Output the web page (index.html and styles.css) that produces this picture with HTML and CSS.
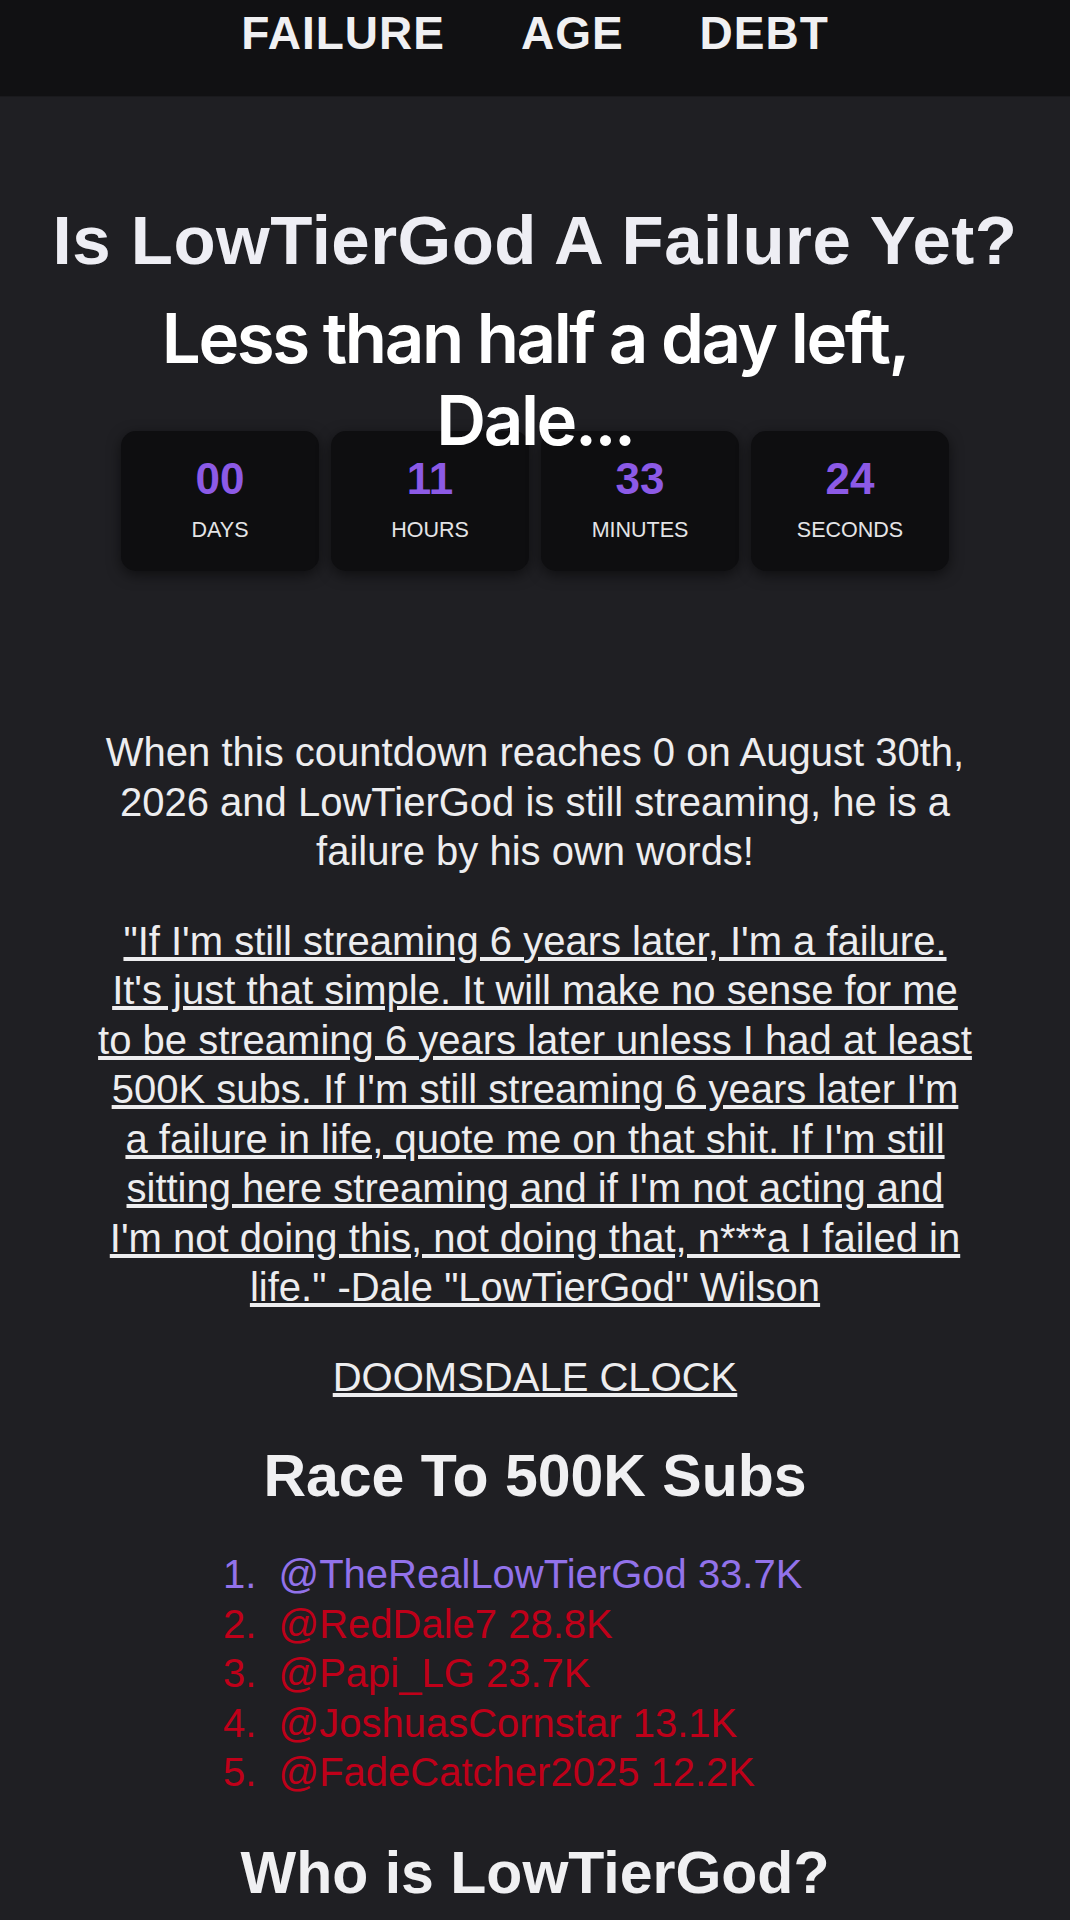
FILE: index.html
```html
<!DOCTYPE html>
<html lang="en">
<head>
  <meta charset="UTF-8" />
  <meta name="viewport" content="width=device-width, initial-scale=1.0" />
  <title>Is LowTierGod A Failure Yet?</title>
  <link rel="stylesheet" href="styles.css">
</head>
<body>
  <header class="topbar">
    <nav class="nav">
      <a href="#">FAILURE</a>
      <a href="#">AGE</a>
      <a href="#">DEBT</a>
    </nav>
  </header>

  <main class="container">
    <h1>Is LowTierGod A Failure Yet?</h1>
    <h2 class="tagline">Less than half a day left, Dale...</h2>

    <div class="countdown">
      <div class="unit">
        <div class="num" id="days">00</div>
        <div class="label">DAYS</div>
      </div>
      <div class="unit">
        <div class="num" id="hours">11</div>
        <div class="label">HOURS</div>
      </div>
      <div class="unit">
        <div class="num" id="minutes">33</div>
        <div class="label">MINUTES</div>
      </div>
      <div class="unit">
        <div class="num" id="seconds">24</div>
        <div class="label">SECONDS</div>
      </div>
    </div>

    <p class="intro">When this countdown reaches 0 on August 30th, 2026 and LowTierGod is still streaming, he is a failure by his own words!</p>

    <p><a href="#">"If I'm still streaming 6 years later, I'm a failure. It's just that simple. It will make no sense for me to be streaming 6 years later unless I had at least 500K subs. If I'm still streaming 6 years later I'm a failure in life, quote me on that shit. If I'm still sitting here streaming and if I'm not acting and I'm not doing this, not doing that, n***a I failed in life." -Dale "LowTierGod" Wilson</a></p>

    <p><a href="#">DOOMSDALE CLOCK</a></p>

    <h2>Race To 500K Subs</h2>
    <ol class="race">
      <li class="leader">@TheRealLowTierGod 33.7K</li>
      <li>@RedDale7 28.8K</li>
      <li>@Papi_LG 23.7K</li>
      <li>@JoshuasCornstar 13.1K</li>
      <li>@FadeCatcher2025 12.2K</li>
    </ol>

    <section class="about">
      <h2>Who is LowTierGod?</h2>
    </section>
  </main>
</body>
</html>
```

FILE: styles.css
```css
body {
  margin: 0;
  background: #1f1f23;
  color: #ededef;
  font-family: "Liberation Sans", Arial, sans-serif;
  font-size: 40px;
  line-height: 49.5px;
}
a {
  color: inherit;
}
.topbar {
  height: 97px;
  box-sizing: border-box;
  padding-top: 6px;
  background: #111113;
  border-bottom: 1px solid #1a1a1d;
}
.nav {
  display: flex;
  justify-content: center;
  gap: 76px;
  line-height: normal;
}
.nav a {
  color: #f0f0f2;
  text-decoration: none;
  font-size: 46px;
  font-weight: bold;
  letter-spacing: 1px;
}
.container {
  padding: 0 96px;
  text-align: center;
}
h1 {
  margin: 104px -60px 17px;
  font-size: 69px;
  line-height: normal;
  color: #eeeef4;
  letter-spacing: 0.5px;
}
h2 {
  margin: 40px 0;
  font-size: 59px;
  line-height: normal;
  color: #f0f0f2;
}
.tagline {
  position: relative;
  z-index: 1;
  height: 82px;
  margin: 0 0 52px;
  font-family: Inter, "Liberation Sans", sans-serif;
  font-weight: 600;
  font-size: 69px;
  line-height: 82px;
  letter-spacing: -0.035em;
  color: #ffffff;
}
.countdown {
  display: flex;
  justify-content: center;
  gap: 12px;
  margin: 0 -40px 157px;
}
.unit {
  width: 198px;
  box-sizing: border-box;
  padding: 23px 0 28px;
  background: #0e0e10;
  border-radius: 15px;
  box-shadow: 0 4px 14px rgba(0, 0, 0, 0.55);
}
.num {
  font-size: 44px;
  font-weight: bold;
  line-height: normal;
  color: #8c5ae6;
}
.label {
  margin-top: 14px;
  font-size: 21.5px;
  line-height: normal;
  color: #e4e4e6;
}
p {
  margin: 40px 0;
}
.intro {
  margin-top: 0;
}
.race {
  width: fit-content;
  margin: 39px auto 41px;
  padding: 0;
  text-align: left;
  color: #bf0019;
}
.race .leader {
  color: #9272ea;
}
.race li {
  padding-left: 11px;
}
.about h2 {
  margin-top: 0;
}
```
